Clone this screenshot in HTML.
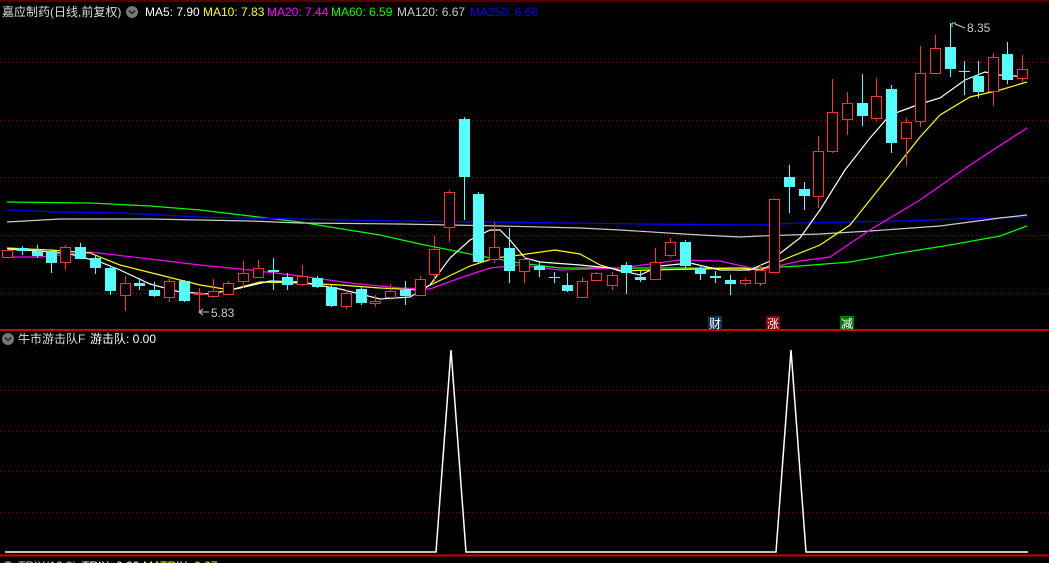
<!DOCTYPE html>
<html><head><meta charset="utf-8"><style>
html,body{margin:0;padding:0;background:#000;width:1049px;height:563px;overflow:hidden}
svg{display:block}
text{font-family:"Liberation Sans","Noto Sans CJK SC",sans-serif;font-size:12px}
</style></head><body>
<svg id="s" width="1049" height="563" viewBox="0 0 1049 563" xmlns="http://www.w3.org/2000/svg">
<rect width="1049" height="563" fill="#000"/>
<line x1="0" y1="1" x2="1049" y2="1" stroke="#a00" stroke-width="1"/>
<g stroke="#900" stroke-dasharray="1,3" stroke-width="1">
<line x1="0" y1="62.5" x2="1049" y2="62.5"/><line x1="0" y1="120.5" x2="1049" y2="120.5"/>
<line x1="0" y1="177.5" x2="1049" y2="177.5"/><line x1="0" y1="235.5" x2="1049" y2="235.5"/>
<line x1="0" y1="293.5" x2="1049" y2="293.5"/>
<line x1="0" y1="390.5" x2="1049" y2="390.5"/><line x1="0" y1="431.5" x2="1049" y2="431.5"/>
<line x1="0" y1="471.5" x2="1049" y2="471.5"/><line x1="0" y1="512.5" x2="1049" y2="512.5"/>
</g>
<line x1="0" y1="330" x2="1049" y2="330" stroke="#c00" stroke-width="2"/>
<line x1="0" y1="555.5" x2="1049" y2="555.5" stroke="#c00" stroke-width="2"/>
<g id="ma" fill="none" stroke-width="1.2"></g>
<g id="c"></g>
<text x="2" y="16" fill="#ddd">嘉应制药(日线,前复权)</text>
<circle cx="132" cy="12" r="6" fill="#777"/><path d="M129 10.5 L132 13.5 L135 10.5" stroke="#222" fill="none" stroke-width="1.5"/>
<text x="145" y="16" fill="#fff">MA5: 7.90</text>
<text x="203" y="16" fill="#ff0">MA10: 7.83</text>
<text x="267" y="16" fill="#f0f">MA20: 7.44</text>
<text x="331" y="16" fill="#0f0">MA60: 6.59</text>
<text x="397" y="16" fill="#ccc">MA120: 6.67</text>
<text x="470" y="16" fill="#00f">MA250: 6.66</text>
<text x="967" y="32" fill="#ccc">8.35</text>
<path d="M952 23 L952 27 M952 23 L956 23 M955 24 L965 28" stroke="#ccc" fill="none"/>
<text x="211" y="317" fill="#ccc">5.83</text>
<path d="M199 312 L209 312 M199 312 L203 309 M199 312 L203 315" stroke="#ccc" fill="none"/>
<rect x="708" y="316" width="14" height="14" fill="#135"/><text x="709" y="328" fill="#fff">财</text>
<rect x="766" y="316" width="14" height="14" fill="#800"/><text x="767" y="328" fill="#fff">涨</text>
<rect x="840" y="316" width="14" height="14" fill="#070"/><text x="841" y="328" fill="#fff">减</text>
<circle cx="8" cy="339" r="6" fill="#777"/><path d="M5 337.5 L8 340.5 L11 337.5" stroke="#222" fill="none" stroke-width="1.5"/>
<text x="18" y="343" fill="#ddd">牛市游击队F</text>
<text x="90" y="343" fill="#fff">游击队: 0.00</text>
<polyline fill="none" stroke="#fff" stroke-width="1.5" points="5,552 436,552 451,350 466,552 776,552 791,350 806,552 1028,552"/>
<circle cx="8" cy="567" r="6" fill="#777"/>
<text x="18" y="570" fill="#ccc">TRIX(12,9)</text><text x="82" y="570" fill="#fff">TRIX: 0.00</text><text x="143" y="570" fill="#ff0">MATRIX: 0.07</text>
</svg>
<script>
var C=[[7,250,257,249,258,'r'],[22,248,251,246,255,'c'],[37,251,256,245,258,'c'],[51,251,263,249,273,'c'],[65,247,262,245,270,'r'],[80,247,259,243,259,'c'],[95,258,268,255,274,'c'],[110,268,291,266,295,'c'],[125,283,295,276,311,'r'],[139,283,286,278,290,'c'],[154,290,296,282,297,'c'],[169,281,297,276,302,'r'],[184,281,301,280,302,'c'],[199,293,294,288,312,'r'],[213,291,296,279,298,'r'],[228,283,294,281,295,'r'],[243,273,281,261,288,'r'],[258,268,277,260,278,'r'],[273,270,272,258,290,'c'],[287,277,285,273,290,'c'],[302,276,284,265,286,'r'],[317,278,287,276,288,'c'],[331,287,306,285,307,'c'],[346,293,306,290,309,'r'],[361,289,303,286,305,'c'],[375,301,303,295,307,'r'],[390,291,297,284,300,'r'],[405,290,296,281,305,'c'],[420,279,295,276,296,'r'],[434,249,274,236,282,'r'],[449,192,227,190,242,'r'],[464,119,177,117,220,'c'],[478,194,262,192,263,'c'],[494,247,259,222,263,'r'],[509,248,271,228,283,'c'],[524,259,271,257,283,'r'],[539,266,270,262,277,'c'],[554,277,278,272,283,'c'],[567,285,291,273,292,'c'],[582,281,297,277,298,'r'],[596,273,280,272,281,'r'],[612,275,285,272,290,'r'],[626,265,273,262,294,'c'],[640,277,280,271,282,'c'],[655,262,279,248,280,'r'],[670,242,255,238,257,'r'],[685,242,266,240,268,'c'],[700,268,274,265,280,'c'],[715,276,278,271,283,'c'],[730,280,284,275,295,'c'],[745,280,283,278,286,'r'],[760,270,283,265,286,'r'],[774,199,272,198,273,'r'],[789,177,187,165,213,'c'],[804,189,196,182,210,'c'],[818,151,196,136,208,'r'],[832,112,151,79,153,'r'],[847,103,119,92,135,'r'],[862,103,116,74,126,'c'],[876,96,118,78,122,'r'],[891,89,143,85,153,'c'],[906,122,138,118,166,'r'],[920,73,121,46,127,'r'],[935,48,73,35,74,'r'],[950,47,69,23,77,'c'],[964,71,72,61,95,'c'],[978,76,92,61,98,'c'],[993,57,91,53,106,'r'],[1007,54,80,42,84,'c'],[1022,69,78,55,83,'r']];
var ns='http://www.w3.org/2000/svg',h='';
C.forEach(function(k){var x=k[0],r=k[5]=='r',col=r?'#f33':'#5ff';
h+='<line x1="'+(x+.5)+'" y1="'+k[3]+'" x2="'+(x+.5)+'" y2="'+k[4]+'" stroke="'+col+'"/>';
var hh=Math.max(k[2]-k[1],1);
if(r)h+='<rect x="'+(x-5+.5)+'" y="'+(k[1]+.5)+'" width="10" height="'+hh+'" fill="#000" stroke="#f33"/>';
else h+='<rect x="'+(x-5)+'" y="'+k[1]+'" width="11" height="'+hh+'" fill="#5ff"/>';});
document.getElementById('c').innerHTML=h;
var M={'#0f0':'7,202 90,203 150,206 200,210 250,216 300,222 330,227 380,235 420,244 450,250 480,256 520,263 560,268 700,268 760,268 800,266 850,262 900,253 950,245 1000,236 1027,226',
'#00f':'7,210 60,212 120,213 200,217 300,219 400,221 500,222 640,224 760,225 800,223 900,221 960,219 1027,217',
'#ccc':'7,222 60,219 150,219 250,221 300,223 400,224 500,226 580,228 620,230 700,235 740,237 760,236 820,234 870,231 940,226 1000,218 1027,215',
'#f0f':'7,257 40,257 90,252 150,259 200,265 250,270 300,276 350,283 400,288 430,289 460,278 490,268 520,265 560,270 620,268 680,260 720,261 760,270 800,261 830,257 870,230 920,200 970,165 1027,128',
'#ff0':'7,248 50,250 90,253 120,265 160,275 200,285 230,290 260,282 300,283 340,285 380,288 420,290 445,278 470,266 495,258 520,255 555,250 580,254 600,265 620,271 650,270 700,269 740,268 760,270 790,257 820,245 850,225 870,200 890,175 920,137 940,115 970,97 1000,90 1027,82',
'#fff':'7,249 40,251 70,254 100,262 120,270 150,284 180,292 210,294 240,288 270,281 300,282 340,289 380,299 410,297 430,285 450,258 470,240 490,230 500,230 510,240 525,258 540,262 580,265 610,268 640,275 660,266 690,263 720,270 750,270 770,261 800,238 820,210 845,170 870,138 890,115 920,104 940,98 965,80 985,72 1000,75 1027,77'};
var g='';for(var k in M)g+='<polyline points="'+M[k]+'" stroke="'+k+'"/>';
document.getElementById('ma').innerHTML=g;
</script>
</body></html>
